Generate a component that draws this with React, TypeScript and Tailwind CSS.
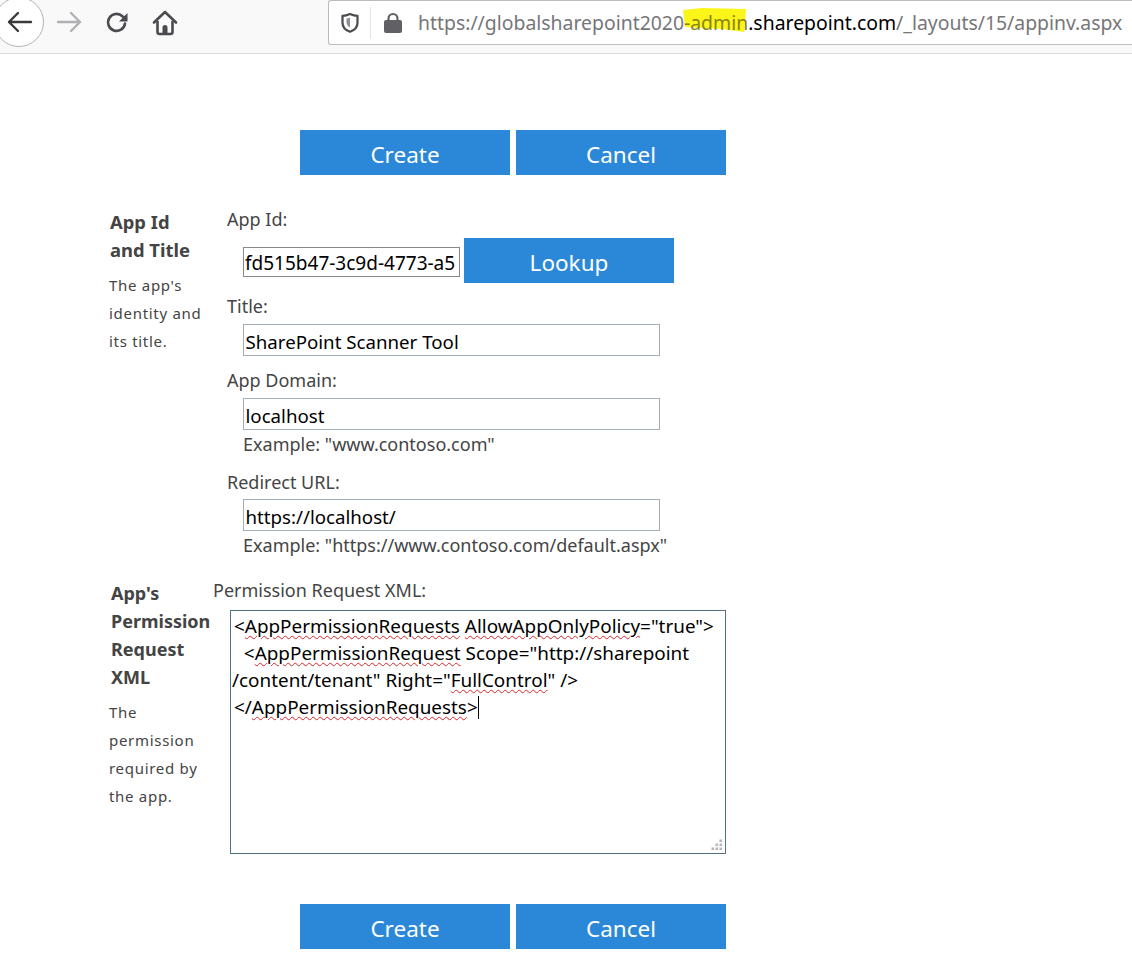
const seg = 'font-["Noto_Sans","Open_Sans",sans-serif]';

function Btn({ label, className = "" }: { label: string; className?: string }) {
  return (
    <button className={`w-[210px] h-[45px] bg-[#2b88d8] text-white text-[22.5px] leading-[50px] font-normal shrink-0 ${className}`}>
      {label}
    </button>
  );
}

function ButtonRow({ className }: { className: string }) {
  return (
    <div className={`flex gap-[6px] ml-[300px] ${className}`}>
      <Btn label="Create" />
      <Btn label="Cancel" />
    </div>
  );
}

function Field({ value, className = "" }: { value: string; className?: string }) {
  return (
    <div className={`ml-[16px] w-[417px] h-[32px] border border-[#a3aeb6] text-black text-[18.7px] leading-[33px] pl-[1.5px] overflow-hidden whitespace-nowrap ${className}`}>
      {value}
    </div>
  );
}

function Wavy({ children }: { children: React.ReactNode }) {
  return <span className="underline decoration-wavy decoration-[#d9262b] decoration-1 underline-offset-2">{children}</span>;
}

function Toolbar() {
  return (
    <div className="h-[54px] bg-[#f9f9fa] border-b border-[#dcdcde] flex items-start overflow-hidden">
      <div className="w-[50px] h-[50px] rounded-full border border-[#b4b4b6] bg-white ml-[-6px] mt-[-3px] shrink-0 flex items-center justify-center">
        <svg width="26" height="24" viewBox="0 0 26 24" fill="none" stroke="#3a3a3e" strokeWidth="2.4" strokeLinecap="round" strokeLinejoin="round" className="ml-[2px]">
          <path d="M24 12H2M11 3l-9 9 9 9" />
        </svg>
      </div>
      <svg width="26" height="24" viewBox="0 0 26 24" fill="none" stroke="#b1b1b3" strokeWidth="2.4" strokeLinecap="round" strokeLinejoin="round" className="ml-[12px] mt-[10px] shrink-0">
        <path d="M2 12h22M15 3l9 9-9 9" />
      </svg>
      <svg width="24" height="24" viewBox="0 0 24 24" fill="none" className="ml-[23px] mt-[10px] shrink-0">
        <path d="M20 13.500A8.500 8.500 0 1 1 17.400 6.200L21 9" stroke="#4a4a4f" strokeWidth="2.6" strokeLinecap="round" />
        <path d="M22.500 3v8.500H14z" fill="#4a4a4f" />
      </svg>
      <svg width="26" height="26" viewBox="0 0 26 26" className="ml-[23px] mt-[10px] shrink-0" fill="none">
        <path d="M2 12.500 13 2l11 10.500" stroke="#4a4a4f" strokeWidth="2.6" strokeLinecap="round" strokeLinejoin="round" />
        <path d="M5.500 11v11a2 2 0 0 0 2 2h11a2 2 0 0 0 2-2V11" stroke="#4a4a4f" strokeWidth="2.6" />
        <path d="M10.500 24v-6.500a2.500 2.500 0 0 1 5 0V24z" fill="#4a4a4f" />
      </svg>
      <div className="ml-[150px] flex-1 h-[45px] min-w-0 bg-white border border-r-0 border-[#bcbcbe] rounded-l-[3px] flex items-center isolate">
        <svg width="20" height="22" viewBox="0 0 20 22" fill="none" className="ml-[11px] shrink-0">
          <path d="M10 2c3 1.400 5 1.800 7.500 1.800v7c0 4.600-3.400 7.600-7.500 9-4.100-1.400-7.500-4.400-7.500-9v-7C5 3.800 7 3.400 10 2z" stroke="#4a4a4f" strokeWidth="2.2" strokeLinejoin="round" />
          <path d="M10 5.500c-1 .5-2.300.9-3.500.9v4.200c0 2.300 1.500 4 3.500 5z" fill="#8f8f93" />
        </svg>
        <div className="w-px h-[32px] bg-[#e3e3e5] ml-[10px] shrink-0" />
        <svg width="18" height="21" viewBox="0 0 18 21" className="ml-[13px] shrink-0" fill="none">
          <path d="M4.500 9V6.500a4.500 4.500 0 0 1 9 0V9" stroke="#616165" strokeWidth="2.2" />
          <rect x="0" y="8" width="18" height="13" rx="2" fill="#616165" />
        </svg>
        <div className="ml-[16px] text-[19.4px] leading-[50px] text-[#767679] whitespace-nowrap">
          https://globalsharepoint2020
          <span className="relative text-[#8a8412]">
            -admin
            <svg width="66" height="26" viewBox="0 0 66 26" className="absolute left-[-2px] top-[-2px] -z-10" fill="#fbf51a">
              <path d="M1 3 20 1 64 2 62 25 40 22 3 20z" />
            </svg>
          </span>
          <span className="text-black">.sharepoint.com</span>
          /_layouts/15/appinv.aspx
        </div>
      </div>
    </div>
  );
}

export default function App() {
  return (
    <div className={`w-[1132px] h-[956px] bg-white overflow-hidden ${seg}`}>
      <Toolbar />
      <ButtonRow className="mt-[76px]" />

      <div className="flex mt-[31px] text-[#444444]">
        <div className="ml-[110px] w-[117px] shrink-0 pt-[2px]">
          <div className="text-[18.4px] font-bold leading-[28px]">App Id<br />and Title</div>
          <div className="text-[15px] leading-[28px] tracking-[0.7px] mt-[7px] -ml-px">The app's<br />identity and<br />its title.</div>
        </div>
        <div className="flex-1 text-[18px] leading-[28px]">
          <div className="mt-[-1px]">App Id:</div>
          <div className="flex items-start mt-[5px]">
            <div className="ml-[16px] w-[217px] h-[30px] mt-[9px] border border-[#8a8a8a] text-black text-[19px] leading-[30px] pl-[1px] overflow-hidden whitespace-nowrap">fd515b47-3c9d-4773-a5</div>
            <Btn label="Lookup" className="ml-[4px]" />
          </div>
          <div className="mt-[9px]">Title:</div>
          <Field value="SharePoint Scanner Tool" className="mt-[4px]" />
          <div className="mt-[10px]">App Domain:</div>
          <Field value="localhost" className="mt-[4px]" />
          <div className="ml-[16px] leading-[28px]">Example: "www.contoso.com"</div>
          <div className="mt-[10px]">Redirect URL:</div>
          <Field value="https://localhost/" className="mt-[3px]" />
          <div className="ml-[16px] leading-[28px]">Example: "https://www.contoso.com/default.aspx"</div>
        </div>
      </div>

      <div className="flex mt-[17px] text-[#444444]">
        <div className="ml-[111px] w-[102px] shrink-0 pt-[3px]">
          <div className="text-[18px] font-bold leading-[28px]">App's<br />Permission<br />Request<br />XML</div>
          <div className="text-[15px] leading-[28px] tracking-[0.7px] mt-[7px] -ml-[2px]">The<br />permission<br />required by<br />the app.</div>
        </div>
        <div className="flex-1 text-[18px] leading-[28px]">
          <div>Permission Request XML:</div>
          <div className="relative ml-[17px] mt-[6px] w-[496px] h-[244px] border border-[#4e7282] pt-[2px] pl-[3px] pr-[2px] text-black text-[18.9px] leading-[27px]">
            <div className="whitespace-pre">&lt;<Wavy>AppPermissionRequests</Wavy> <Wavy>AllowAppOnlyPolicy</Wavy>="true"&gt;</div>
            <div className="whitespace-pre">{"  <"}<Wavy>AppPermissionRequest</Wavy> Scope="http://sharepoint</div>
            <div className="whitespace-pre -ml-[2px]">/content/tenant" Right="<Wavy>FullControl</Wavy>" /&gt;</div>
            <div className="whitespace-pre">&lt;/<Wavy>AppPermissionRequests</Wavy>&gt;<span className="inline-block w-px h-[23px] bg-black align-[-5px]" /></div>
            <svg width="12" height="12" viewBox="0 0 12 12" className="absolute right-[2px] bottom-[2px]" fill="#b5b5b5">
              <rect x="8.5" y="0.5" width="2.5" height="2.5" />
              <rect x="4.5" y="4.5" width="2.5" height="2.5" />
              <rect x="8.5" y="4.5" width="2.5" height="2.5" />
              <rect x="0.5" y="8.5" width="2.5" height="2.5" />
              <rect x="4.5" y="8.5" width="2.5" height="2.5" />
              <rect x="8.5" y="8.5" width="2.5" height="2.5" />
            </svg>
          </div>
        </div>
      </div>

      <ButtonRow className="mt-[50px]" />
    </div>
  );
}
